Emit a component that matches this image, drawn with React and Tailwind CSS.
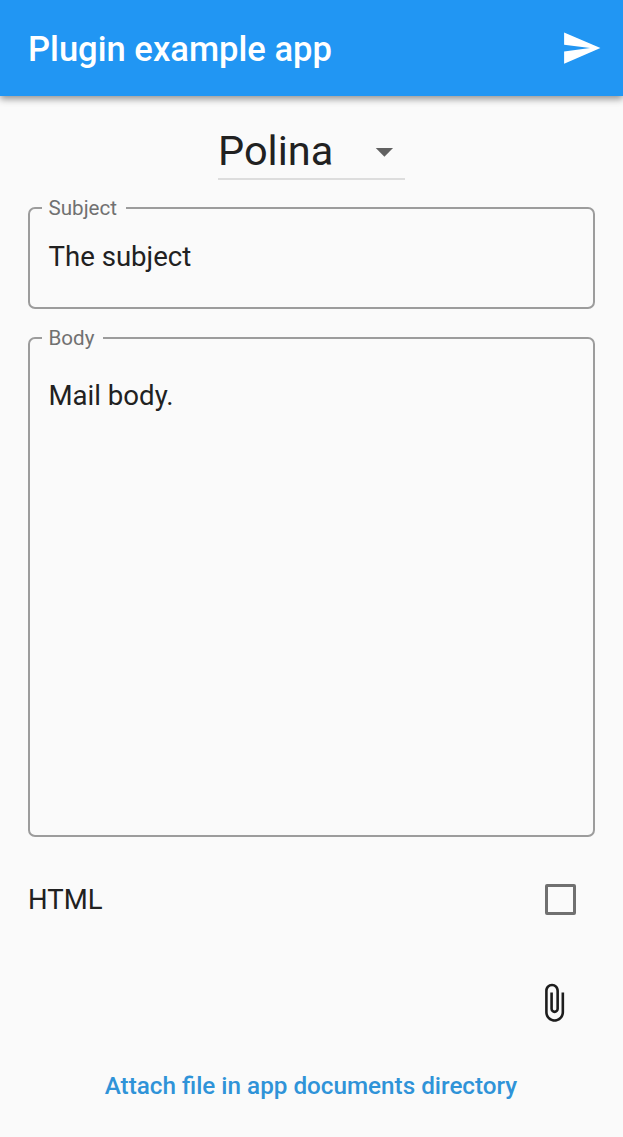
function SendIcon() {
  return (
    <svg viewBox="0 0 24 24" className="size-[41.5px] shrink-0 fill-white" aria-hidden="true">
      <path d="M1.8 21.2L22.8 12.2 1.8 3.2 1.8 10.2l15 2-15 2z" />
    </svg>
  );
}

function AttachIcon() {
  return (
    <svg viewBox="0 0 24 24" className="size-[41.5px] fill-[#1d1d1d]" aria-hidden="true">
      <path d="M16.5 6v11.5c0 2.21-1.79 4-4 4s-4-1.79-4-4V5c0-1.38 1.12-2.5 2.5-2.5s2.5 1.12 2.5 2.5v10.5c0 .55-.45 1-1 1s-1-.45-1-1V6H10v9.5c0 1.38 1.12 2.5 2.5 2.5s2.5-1.12 2.5-2.5V5c0-2.21-1.79-4-4-4S7 2.79 7 5v12.5c0 3.04 2.46 5.5 5.5 5.5s5.5-2.46 5.5-5.5V6h-1.5z" />
    </svg>
  );
}

function OutlinedField({ label, className, children }) {
  return (
    <fieldset className={"rounded-[7px] border-2 border-[#9c9c9c] pl-[12px] " + className}>
      <legend className="h-6 pr-[9px] pl-[6.5px] text-[20.6px] leading-6 text-[#717171]">{label}</legend>
      <div className="pl-[6.5px] text-[27.6px] leading-8 text-[#212121]">{children}</div>
    </fieldset>
  );
}

export default function App() {
  return (
    <div className="flex h-[1137px] w-full flex-col overflow-hidden bg-[#fafafa] font-['Roboto',sans-serif]">
      <header className="flex h-24 shrink-0 items-center justify-between bg-[#2196f3] pr-[21px] pl-7 shadow-[0_3px_7px_rgba(0,0,0,0.42)]">
        <h1 className="pt-[2px] text-[34.6px] leading-10 font-medium text-white">Plugin example app</h1>
        <button aria-label="Send"><SendIcon /></button>
      </header>
      <main className="flex flex-1 flex-col px-7 pt-[22px]">
        <button className="flex h-[62px] w-[187px] items-center justify-between self-center border-b-2 border-[#dddddd] pt-[5px]">
          <span className="text-[41.5px] leading-[48px] text-[#212121]">Polina</span>
          <svg viewBox="0 0 24 24" className="size-[41.5px] fill-[#616161]" aria-hidden="true">
            <path d="M6.8 10.4l5 5 5-5z" />
          </svg>
        </button>
        <OutlinedField label="Subject" className="mt-4 h-[113px] pt-[21px]">The subject</OutlinedField>
        <OutlinedField label="Body" className="mt-[17px] h-[511px] pt-[30px]">Mail body.</OutlinedField>
        <label className="mt-[27px] flex h-[70px] items-center justify-between pr-[19px]">
          <span className="pt-[2px] text-[27.5px] leading-8 text-[#212121]">HTML</span>
          <span className="size-[31px] rounded-[2px] border-[3px] border-[#707070]" />
        </label>
        <button aria-label="Attach file" className="mt-12 mr-[21px] self-end"><AttachIcon /></button>
        <button className="mt-12 self-center pr-px text-[24.25px] leading-7 font-medium text-[#2f93d8]">
          Attach file in app documents directory
        </button>
      </main>
    </div>
  );
}
